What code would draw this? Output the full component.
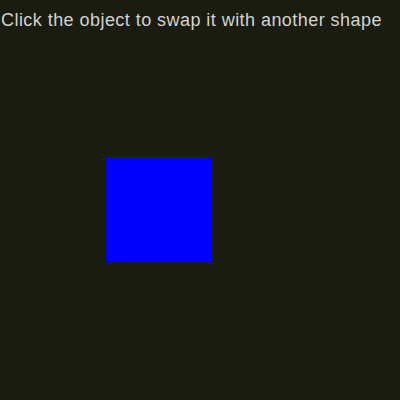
export default function App() {
  return (
    <div className="h-[400px] w-[400px] bg-[#1b1c10] pt-[9px]">
      <p className="pl-[1px] text-[18px] leading-[22px] tracking-[0.45px] text-[#d2d2d2] font-['Liberation_Sans',sans-serif]">
        Click the object to swap it with another shape
      </p>
      <button
        aria-label="shape"
        className="ml-[106px] mt-[126px] block h-[105px] w-[106px] bg-[#0000ff]"
      />
    </div>
  );
}
